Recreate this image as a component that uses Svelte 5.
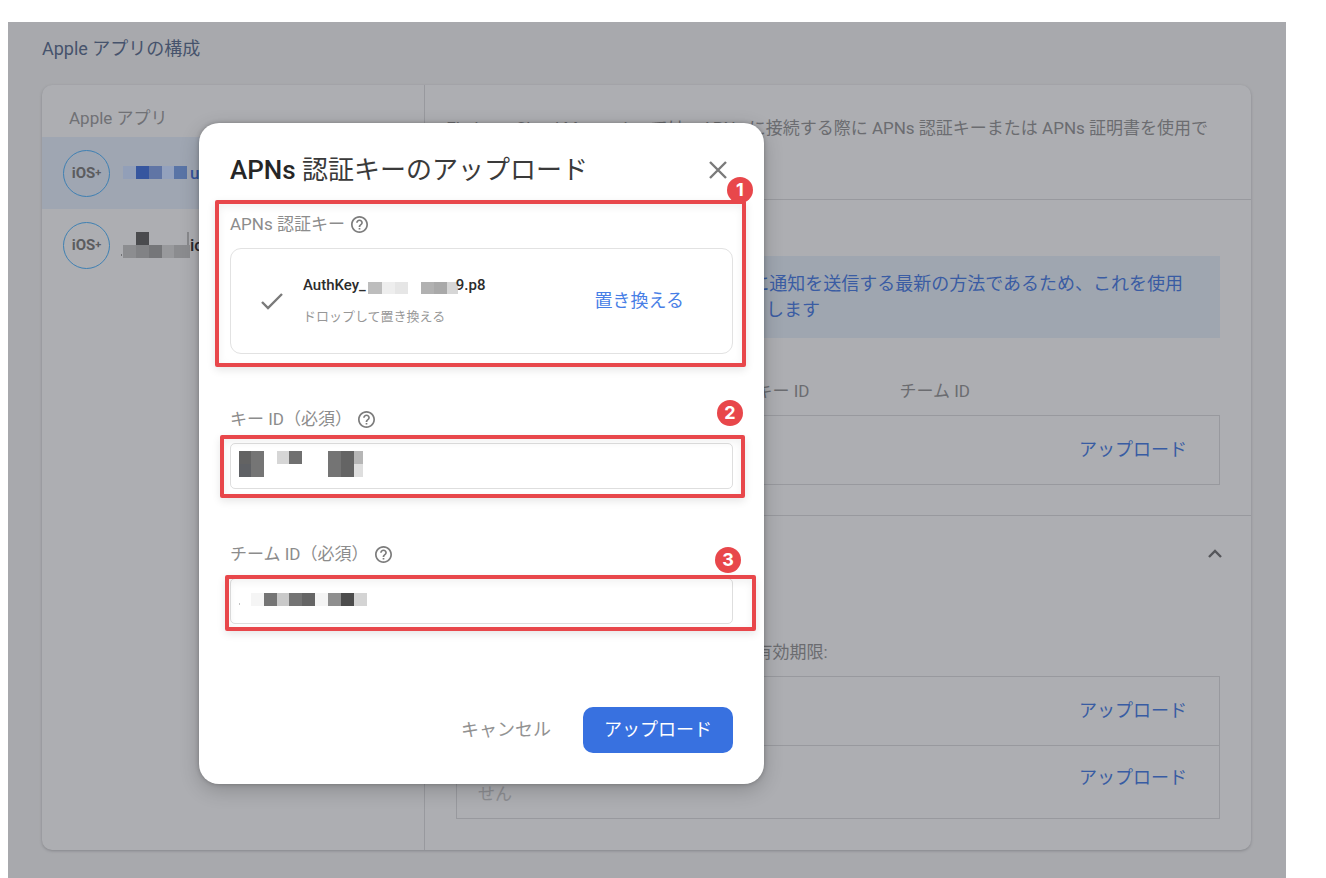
<script lang="ts">
  type Cell = [x: number, y: number, w: number, h: number, fill: string];

  const apps: { active: boolean; tail: string; cells: Cell[] }[] = [
    {
      active: true,
      tail: 'ua',
      cells: [
        [3, 6, 13, 13, '#929fb8'],
        [16, 6, 13, 13, '#36569f'],
        [29, 6, 13, 13, '#6075a5'],
        [42, 6, 12, 13, '#93a1bd'],
        [54, 6, 13, 13, '#5974a6']
      ]
    },
    {
      active: false,
      tail: 'ic',
      cells: [
        [1, 22, 1, 2, '#707174'],
        [16, 0, 13, 13, '#4a4b4e'],
        [67, 0, 2, 13, '#88898c'],
        [3, 13, 13, 13, '#8c8d90'],
        [16, 13, 13, 13, '#818285'],
        [29, 13, 13, 13, '#757679'],
        [42, 13, 12, 13, '#98999c'],
        [54, 13, 16, 13, '#8b8c8f']
      ]
    }
  ];

  const fileCells: Cell[] = [
    [2, 6, 14, 12, '#bdbdbd'],
    [16, 6, 13, 12, '#eeeeee'],
    [29, 6, 13, 12, '#e6e6e6'],
    [55, 6, 13, 12, '#b1b1b1'],
    [68, 6, 13, 12, '#a9a9a9'],
    [81, 6, 11, 12, '#d6d6d6']
  ];

  const keyCells: Cell[] = [
    [9, 8, 12, 13, '#636363'],
    [9, 21, 12, 13, '#5f6165'],
    [21, 8, 13, 26, '#757575'],
    [47, 8, 12, 13, '#d6d6d6'],
    [59, 8, 13, 13, '#707070'],
    [98, 8, 13, 26, '#747474'],
    [111, 8, 13, 26, '#646464'],
    [124, 8, 9, 13, '#b6b6b6'],
    [124, 21, 9, 13, '#dedede']
  ];

  const teamCells: Cell[] = [
    [9, 25, 1, 2, '#c4c4c4'],
    [21, 15, 13, 13, '#f5f5f5'],
    [34, 15, 13, 13, '#757575'],
    [47, 15, 12, 13, '#c9c9c9'],
    [59, 15, 13, 13, '#747474'],
    [72, 15, 13, 13, '#656565'],
    [85, 15, 13, 13, '#f4f4f4'],
    [98, 15, 13, 13, '#8f8f8f'],
    [111, 15, 13, 13, '#4c4c4c'],
    [124, 15, 13, 13, '#d4d4d4']
  ];
</script>

{#snippet mosaic(cells: Cell[], w: number, h: number)}
  <svg class="mosaic" width={w} height={h} shape-rendering="crispEdges" aria-hidden="true">
    {#each cells as [x, y, cw, ch, fill]}
      <rect {x} {y} width={cw} height={ch} {fill} />
    {/each}
  </svg>
{/snippet}

{#snippet help()}
  <svg class="help" viewBox="2 2 20 20" aria-hidden="true">
    <path
      d="M11 18h2v-2h-2v2zm1-16C6.48 2 2 6.48 2 12s4.48 10 10 10 10-4.480 10-10S17.520 2 12 2zm0 18c-4.410 0-8-3.590-8-8s3.590-8 8-8 8 3.590 8 8-3.590 8-8 8zm0-14c-2.210 0-4 1.790-4 4h2c0-1.100.9-2 2-2s2 .9 2 2c0 2-3 1.750-3 5h2c0-2.250 3-2.500 3-5 0-2.210-1.790-4-4-4z"
    />
  </svg>
{/snippet}

<div class="frame">
  <main class="page">
    <h1>Apple アプリの構成</h1>
    <div class="card">
      <nav class="apps">
        <h2>Apple アプリ</h2>
        {#each apps as app}
          <a href="#app" class="app" class:active={app.active}>
            <span class="ios">iOS<small>+</small></span>
            <span class="name">
              {@render mosaic(app.cells, 70, 26)}
              <span>{app.tail}</span>
            </span>
          </a>
        {/each}
      </nav>

      <div class="detail">
        <section class="intro">
          <p>Firebase Cloud Messaging では、APNs に接続する際に APNs 認証キーまたは APNs 証明書を使用で</p>
        </section>

        <section class="keys">
          <div class="notice">
            <p>に通知を送信する最新の方法であるため、これを使用</p>
            <p class="second">します</p>
          </div>
          <table>
            <colgroup><col class="c1" /><col class="c2" /><col /><col /></colgroup>
            <thead>
              <tr><th></th><th>キー ID</th><th>チーム ID</th><th></th></tr>
            </thead>
            <tbody>
              <tr>
                <td></td><td></td><td></td>
                <td class="action"><button class="link">アップロード</button></td>
              </tr>
            </tbody>
          </table>
        </section>

        <section class="certs">
          <button class="collapse" aria-label="折りたたむ">
            <svg viewBox="0 0 14 9" width="14" height="9"><path d="M1 8 7 2l6 6" /></svg>
          </button>
          <table>
            <colgroup><col class="c1" /><col class="c2" /><col /><col /></colgroup>
            <thead>
              <tr><th></th><th>有効期限:</th><th></th><th></th></tr>
            </thead>
            <tbody>
              <tr>
                <td></td><td></td><td></td>
                <td class="action"><button class="link">アップロード</button></td>
              </tr>
              <tr class="last">
                <td class="none">せん</td><td></td><td></td>
                <td class="action"><button class="link">アップロード</button></td>
              </tr>
            </tbody>
          </table>
        </section>
      </div>
    </div>
  </main>

  <div class="modal" role="dialog" aria-labelledby="dialog-title">
    <header>
      <h2 id="dialog-title"><span>APNs</span> 認証キーのアップロード</h2>
      <button class="close" aria-label="閉じる">
        <svg viewBox="0 0 18 18" width="18" height="18"><path d="m1 1 16 16M17 1 1 17" /></svg>
      </button>
    </header>

    <div class="field upload">
      <div class="label">APNs 認証キー {@render help()}</div>
      <div class="file">
        <svg class="check" viewBox="0 0 24 18" width="24" height="18"><path d="m2 10 6 6L22 2" /></svg>
        <div class="info">
          <div class="filename">AuthKey_{@render mosaic(fileCells, 90, 18)}9.p8</div>
          <div class="hint">ドロップして置き換える</div>
        </div>
        <button class="link">置き換える</button>
      </div>
      <div class="mark mark-1"></div>
      <span class="badge badge-1">1</span>
    </div>

    <div class="field">
      <label class="label" for="key-id">キー ID（必須） {@render help()}</label>
      <div class="box">
        <input id="key-id" type="text" />
        {@render mosaic(keyCells, 140, 46)}
        <div class="mark mark-2"></div>
        <span class="badge badge-2">2</span>
      </div>
    </div>

    <div class="field">
      <label class="label" for="team-id">チーム ID（必須） {@render help()}</label>
      <div class="box">
        <input id="team-id" type="text" />
        {@render mosaic(teamCells, 140, 46)}
        <div class="mark mark-3"></div>
        <span class="badge badge-3">3</span>
      </div>
    </div>

    <footer>
      <button class="cancel">キャンセル</button>
      <button class="primary">アップロード</button>
    </footer>
  </div>
</div>

<style>
  :global(body) {
    background: #fff;
  }
  * {
    box-sizing: border-box;
  }
  h1, h2, p {
    margin: 0;
    font-weight: 400;
  }
  button {
    padding: 0;
    border: 0;
    background: none;
    font: inherit;
    cursor: pointer;
  }
  svg {
    display: block;
    flex: none;
  }
  .frame {
    position: relative;
    margin: 0 40px 0 8px;
    border-top: 22px solid #fff;
    min-height: 100vh;
    background: #a8a9ad;
    font-family: Roboto, "Noto Sans CJK JP", sans-serif;
    font-size: 17px;
    line-height: 24px;
  }
  .page {
    padding: 15px 35px 27px 34px;
  }
  h1 {
    font-size: 18px;
    color: #46536c;
  }
  .card {
    display: grid;
    grid-template-columns: 382px 1fr;
    margin-top: 24px;
    border-radius: 10px;
    background: #adaeb2;
    box-shadow: 0 1px 3px 0 #85868b;
    overflow: hidden;
  }
  .apps h2 {
    padding: 21px 27px 7px;
    font-size: 17px;
    color: #707175;
  }
  .app {
    display: flex;
    align-items: center;
    gap: 10px;
    height: 72px;
    padding-left: 21px;
    color: #29292c;
    text-decoration: none;
  }
  .app.active {
    background: #9fa6b2;
    color: #36569f;
  }
  .ios {
    display: flex;
    align-items: center;
    justify-content: center;
    width: 47px;
    height: 47px;
    border: 1px solid #3f80b2;
    border-radius: 50%;
    color: #5b5c5f;
    font-size: 15px;
    font-weight: 700;
  }
  .ios small {
    font-size: 11px;
  }
  .name {
    display: flex;
    align-items: center;
    font-weight: 500;
  }
  .mosaic {
    overflow: visible;
  }
  .detail {
    min-width: 0;
    border-left: 1px solid #98999e;
  }
  .intro {
    display: flex;
    justify-content: flex-end;
    height: 114px;
    padding: 31px 43px 0 31px;
    color: #6b6c70;
    white-space: nowrap;
  }
  .keys {
    height: 316px;
    padding: 56px 31px 30px;
    border-top: 1px solid #98999e;
  }
  .notice {
    height: 82px;
    padding: 15px 37px 0;
    background: #9fa6b0;
    color: #3a5ca3;
    font-size: 18px;
    line-height: 26px;
    text-align: right;
    white-space: nowrap;
  }
  .notice .second {
    padding-right: 363px;
  }
  .certs {
    padding: 25px 31px 31px;
    border-top: 1px solid #98999e;
  }
  .collapse {
    display: flex;
    align-items: center;
    justify-content: center;
    width: 24px;
    height: 24px;
    margin: 0 -7px 0 auto;
  }
  .collapse path {
    fill: none;
    stroke: #55565a;
    stroke-width: 2.4;
  }
  table {
    width: 100%;
    border-collapse: collapse;
    table-layout: fixed;
  }
  .c1 {
    width: 299px;
  }
  .c2 {
    width: 144px;
  }
  th {
    padding: 0 0 12px;
    color: #6b6c70;
    font-weight: 400;
    text-align: left;
    vertical-align: bottom;
  }
  .keys th {
    height: 77px;
  }
  .certs th {
    height: 111px;
  }
  tbody {
    border: 1px solid #98999e;
  }
  tbody tr {
    height: 69px;
    border-top: 1px solid #98999e;
  }
  td {
    padding: 0;
  }
  .action {
    padding-right: 32px;
    text-align: right;
  }
  .action .link {
    color: #385ca3;
  }
  tbody .last {
    height: 73px;
  }
  .last .action {
    padding-bottom: 8px;
  }
  .none {
    padding: 24px 0 0 21px;
    color: #8c8d91;
  }
  .link {
    color: #477ee6;
    font-size: 18px;
    line-height: 24px;
  }

  .modal {
    position: absolute;
    top: 101px;
    left: 191px;
    width: 565px;
    padding: 26px 31px 31px;
    border-radius: 20px;
    background: #fff;
    box-shadow: 0 6px 20px rgba(0, 0, 0, 0.2), 0 0 4px rgba(0, 0, 0, 0.25);
  }
  header {
    display: flex;
    align-items: center;
    justify-content: space-between;
    height: 42px;
  }
  header h2 {
    font-size: 26px;
    line-height: 42px;
    color: #3a3a3a;
  }
  header h2 span {
    color: #262626;
    font-weight: 500;
  }
  .close {
    padding: 6px;
  }
  .close path,
  .check path {
    fill: none;
    stroke: #7a7a7a;
    stroke-width: 2.4;
  }
  .field {
    margin-top: 53px;
  }
  .upload {
    position: relative;
    margin-top: 21px;
  }
  .label {
    display: flex;
    align-items: center;
    gap: 6px;
    margin-bottom: 12px;
    color: #8c8c8c;
  }
  .help {
    width: 17px;
    height: 17px;
    fill: #7c7c7c;
  }
  .file {
    display: flex;
    align-items: center;
    height: 106px;
    padding: 0 48px 0 29px;
    border: 1px solid #e2e2e2;
    border-radius: 11px;
  }
  .info {
    flex: 1;
    padding-left: 19px;
  }
  .filename {
    display: flex;
    align-items: center;
    margin-bottom: 12px;
    color: #2c2c2c;
    font-size: 15px;
    font-weight: 500;
    line-height: 20px;
  }
  .hint {
    color: #979797;
    font-size: 13px;
    line-height: 20px;
  }
  .box {
    position: relative;
  }
  .box input {
    display: block;
    width: 100%;
    height: 46px;
    padding: 0 12px;
    border: 1px solid #dedede;
    border-radius: 5px;
    background: #fff;
    font: inherit;
  }
  .box .mosaic {
    position: absolute;
    top: 0;
    left: 0;
    pointer-events: none;
  }
  .mark {
    position: absolute;
    border: 4px solid #e8474b;
    border-radius: 2px;
    box-shadow: 0 3px 8px rgba(0, 0, 0, 0.1), inset 0 3px 8px rgba(0, 0, 0, 0.06);
    pointer-events: none;
  }
  .mark-1 {
    inset: -12px -13px -13px -15px;
  }
  .mark-2 {
    inset: -8px -12px -9px -10px;
  }
  .mark-3 {
    inset: -3px -23px -7px -5px;
  }
  .badge {
    position: absolute;
    width: 26px;
    height: 26px;
    border-radius: 50%;
    background: #e8474b;
    color: #fff;
    font-family: Inter, sans-serif;
    font-size: 18px;
    font-weight: 700;
    line-height: 26px;
    text-align: center;
  }
  .badge-1 {
    top: -35px;
    right: -20px;
  }
  .badge-2 {
    top: -43px;
    right: -10px;
  }
  .badge-3 {
    top: -31px;
    right: -8px;
  }
  footer {
    display: flex;
    align-items: center;
    justify-content: flex-end;
    gap: 32px;
    margin-top: 83px;
    font-size: 18px;
  }
  .cancel {
    color: #929292;
  }
  .primary {
    height: 46px;
    padding: 0 21px;
    border-radius: 10px;
    background: #3871e0;
    color: #fff;
  }
</style>
